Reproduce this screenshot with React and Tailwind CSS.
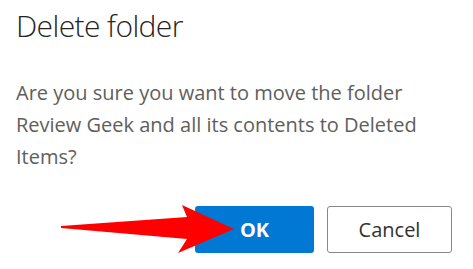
export default function App() {
  return (
    <div
      className="relative h-[269px] w-[473px] overflow-hidden bg-white"
      style={{ fontFamily: '"Open Sans", "Noto Sans", sans-serif' }}
    >
      <h1 className="pl-4 pt-2 text-[30px] leading-[36px] font-light tracking-[-0.6px] text-[#252423]">
        Delete folder
      </h1>
      <p className="mt-[33px] pl-4 text-[20px] leading-[32px] text-[#605e5c]">
        Are you sure you want to move the folder
        <br />
        Review Geek and all its contents to Deleted
        <br />
        Items?
      </p>
      <div className="mt-[33px] flex justify-end gap-[13px] pr-[21px]">
        <button className="h-[47px] w-[119px] rounded-[3px] bg-[#0078d4] text-[20px] font-bold text-white">
          OK
        </button>
        <button className="h-[47px] w-[125px] rounded-[3px] border border-[#8a8886] bg-white text-[20px] text-[#323130]">
          Cancel
        </button>
      </div>

      {/* red annotation arrow pointing at OK */}
      <svg
        className="absolute left-0 top-0"
        width="473"
        height="269"
        viewBox="0 0 473 269"
      >
        <polygon
          points="61,226 187,217 182,205 234,229 178,253 187,239 61,228"
          fill="#ff0000"
        />
      </svg>
    </div>
  );
}
